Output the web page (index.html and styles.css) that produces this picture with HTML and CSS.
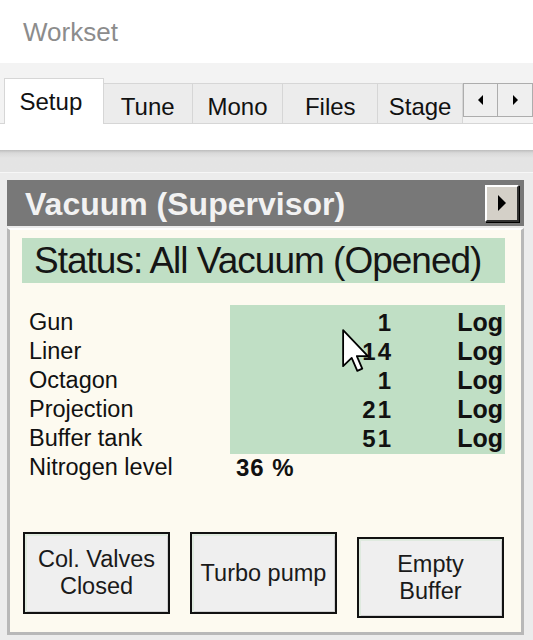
FILE: index.html
```html
<!DOCTYPE html>
<html>

<head>
    <meta charset="utf-8">
    <title>Workset</title>

    <link rel="stylesheet" href="styles.css">
</head>

<body>

    <div class="workset-title">Workset</div>

    <div class="tab-bar">
        <div class="tab active">Setup</div>
        <div class="tab tab-tune">Tune</div>
        <div class="tab tab-mono">Mono</div>
        <div class="tab tab-files">Files</div>
        <div class="tab tab-stage">Stage</div>
        <div class="tab-scroll">
            <button class="scroll-btn">
                <svg width="6" height="10" viewBox="0 0 6 10"><polygon points="5,0 5,10 0,5" fill="#000"/></svg>
            </button>
            <button class="scroll-btn">
                <svg width="6" height="10" viewBox="0 0 6 10"><polygon points="1,0 1,10 6,5" fill="#000"/></svg>
            </button>
        </div>
    </div>

    <div class="tab-page"></div>

    <div class="panel-area">
        <div class="panel">
            <div class="panel-header">
                <span class="panel-title">Vacuum (Supervisor)</span>
                <button class="header-btn">
                    <svg width="10" height="16" viewBox="0 0 10 16"><polygon points="1,0 1,16 9,8" fill="#000"/></svg>
                </button>
            </div>

            <div class="panel-body">
                <div class="status">Status: All Vacuum (Opened)</div>

                <div class="readings">
                    <div class="readings-bg"></div>

                    <div class="row r1">
                        <div class="label">Gun</div>
                        <div class="value">1</div>
                        <div class="log">Log</div>
                    </div>
                    <div class="row r2">
                        <div class="label">Liner</div>
                        <div class="value">14</div>
                        <div class="log">Log</div>
                    </div>
                    <div class="row r3">
                        <div class="label">Octagon</div>
                        <div class="value">1</div>
                        <div class="log">Log</div>
                    </div>
                    <div class="row r4">
                        <div class="label">Projection</div>
                        <div class="value">21</div>
                        <div class="log">Log</div>
                    </div>
                    <div class="row r5">
                        <div class="label">Buffer tank</div>
                        <div class="value">51</div>
                        <div class="log">Log</div>
                    </div>
                    <div class="row r6">
                        <div class="label">Nitrogen level</div>
                        <div class="nitrogen">36 %</div>
                    </div>

                    <svg class="cursor" width="27" height="44" viewBox="0 0 12 19.5">
                        <polygon points="0.5,0.5 0.5,16.5 4.3,12.8 6.8,18.6 9,17.6 6.6,12 11.5,12" fill="#fff" stroke="#000" stroke-width="0.8" stroke-linejoin="round"/>
                    </svg>
                </div>

                <div class="actions">
                    <button class="action-btn">Col. Valves<br>Closed</button>
                    <button class="action-btn">Turbo pump</button>
                    <button class="action-btn action-low">Empty<br>Buffer</button>
                </div>
            </div>
        </div>
    </div>

</body>

</html>
```

FILE: styles.css
```css
/* Page */

body {
    margin: 0;
    width: 533px;
    height: 640px;
    overflow: hidden;
    background: #ffffff;
    font-family: "Liberation Sans", Arial, sans-serif;
    color: #111;
}

button {
    font-family: inherit;
    padding: 0;
    cursor: default;
}

.workset-title {
    height: 26px;
    padding: 19px 0 18px 23px;
    line-height: 26px;
    font-size: 26px;
    color: #8c8c8c;
}

/* Tabs */

.tab-bar {
    display: flex;
    align-items: flex-end;
    height: 60px;
    padding-left: 4px;
    background: #f3f3f3;
    position: relative;
    z-index: 2;
}

.tab {
    box-sizing: border-box;
    height: 40px;
    padding-top: 8px;
    line-height: 30px;
    font-size: 24px;
    text-align: center;
    background: #ececec;
    border: 1px solid #d6d6d6;
    border-left: none;
    border-bottom: none;
}

.tab.active {
    width: 101px;
    height: 46px;
    margin-bottom: -1px;
    padding-top: 8px;
    padding-right: 6px;
    background: #ffffff;
    border-left: 1px solid #d6d6d6;
}

.tab-tune {
    width: 90px;
}

.tab-mono {
    width: 92px;
}

.tab-files {
    width: 96px;
}

.tab-stage {
    width: 86px;
}

.tab-scroll {
    display: flex;
    align-self: flex-start;
    margin-top: 20px;
}

.scroll-btn {
    display: flex;
    align-items: center;
    justify-content: center;
    width: 35px;
    height: 34px;
    background: #efefef;
    border: 1px solid #adadad;
}

.scroll-btn+.scroll-btn {
    border-left: none;
}

.tab-page {
    height: 26px;
    background: #ffffff;
    border-top: 1px solid #d6d6d6;
}

/* Panel */

.panel-area {
    padding-top: 22px;
    background: linear-gradient(#bdbdbd, #d9d9d9 3px, #e4e4e4 8px, #e6e6e6);
}

.panel {
    padding: 7px 9px 5px 7px;
    background: #ececec;
    border-top: 1px solid #f7f7f7;
}

.panel-header {
    display: flex;
    align-items: center;
    justify-content: space-between;
    height: 46px;
    padding: 0 5px 0 18px;
    background: #787878;
}

.panel-title {
    padding-top: 2px;
    line-height: 44px;
    font-size: 32px;
    font-weight: bold;
    color: #f2f2f2;
}

.header-btn {
    display: flex;
    align-items: center;
    justify-content: center;
    box-sizing: border-box;
    width: 34px;
    height: 37px;
    background: #d4d0c8;
    border: 2px solid;
    border-color: #ffffff #303030 #303030 #ffffff;
    box-shadow: 1px 1px 0 #000;
}

.panel-body {
    margin-top: 2px;
    padding: 8px 16px 14px 12px;
    background: #fdfaf0;
    border: 3px solid #b8b8b8;
    border-top: 2px solid #ffffff;
}

.status {
    height: 45px;
    padding-left: 12px;
    line-height: 45px;
    font-size: 37px;
    letter-spacing: -1px;
    background: #c0dfc5;
    color: #151515;
}

/* Readings */

.readings {
    display: grid;
    grid-template-columns: 208px 161px 114px;
    grid-template-rows: repeat(6, 29px);
    margin-top: 25px;
    position: relative;
    line-height: 29px;
    font-size: 23.5px;
}

.readings-bg {
    grid-column: 2 / 4;
    grid-row: 1 / 6;
    margin: -3px 0 -1px 0;
    background: #c0dfc5;
}

.row {
    display: contents;
}

.r1>* {
    grid-row: 1;
}

.r2>* {
    grid-row: 2;
}

.r3>* {
    grid-row: 3;
}

.r4>* {
    grid-row: 4;
}

.r5>* {
    grid-row: 5;
}

.r6>* {
    grid-row: 6;
}

.label {
    grid-column: 1;
    padding-left: 7px;
}

.value {
    grid-column: 2;
    margin-right: -2px;
    text-align: right;
    font-weight: bold;
    font-size: 24px;
    letter-spacing: 2px;
}

.log {
    grid-column: 3;
    padding-right: 2px;
    text-align: right;
    font-weight: bold;
    font-size: 25px;
}

.nitrogen {
    grid-column: 2 / 4;
    padding-left: 6px;
    font-weight: bold;
    font-size: 24px;
    letter-spacing: 1px;
}

.cursor {
    position: absolute;
    left: 320px;
    top: 21px;
}

/* Buttons */

.actions {
    display: flex;
    align-items: flex-start;
    gap: 20px;
    margin-top: 50px;
    padding-left: 1px;
}

.action-btn {
    box-sizing: border-box;
    width: 147px;
    height: 82px;
    line-height: 27px;
    font-size: 23.5px;
    color: #1a1a1a;
    background: #efefef;
    border: 2px solid #111;
    box-shadow: inset 2px 2px 0 #dfeadf, inset -1px -1px 0 #d0d0d0;
}

.action-low {
    margin-top: 5px;
    height: 81px;
}
```
